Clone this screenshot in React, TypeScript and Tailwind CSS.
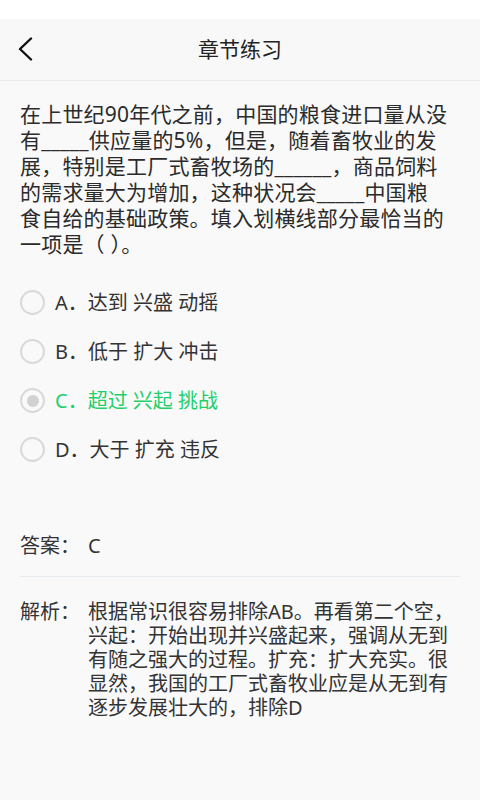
const QUESTION_LINES = [
  "在上世纪90年代之前，中国的粮食进口量从没",
  "有_____供应量的5%，但是，随着畜牧业的发",
  "展，特别是工厂式畜牧场的______，商品饲料",
  "的需求量大为增加，这种状况会_____中国粮",
  "食自给的基础政策。填入划横线部分最恰当的",
  "一项是（ ）。",
]

const OPTIONS = [
  { key: "A", text: "达到 兴盛 动摇" },
  { key: "B", text: "低于 扩大 冲击" },
  { key: "C", text: "超过 兴起 挑战" },
  { key: "D", text: "大于 扩充 违反" },
]

const ANSWER = "C"
const SELECTED = "C"

const ANALYSIS_LINES = [
  "根据常识很容易排除AB。再看第二个空，",
  "兴起：开始出现并兴盛起来，强调从无到",
  "有随之强大的过程。扩充：扩大充实。很",
  "显然，我国的工厂式畜牧业应是从无到有",
  "逐步发展壮大的，排除D",
]

function Radio({ checked }: { checked: boolean }) {
  return (
    <span className="flex h-[25px] w-[25px] shrink-0 items-center justify-center rounded-full border-2 border-[#d9d9d9]">
      {checked && <span className="h-[12px] w-[12px] rounded-full bg-[#d2d2d2]" />}
    </span>
  )
}

export default function App() {
  return (
    <div
      className="min-h-[800px] w-full bg-[#f9f9f9] text-[#333]"
      style={{ fontFamily: '"Noto Sans", "Noto Sans CJK SC", sans-serif' }}
    >
      {/* status bar */}
      <div className="h-[19px] bg-white" />

      {/* header */}
      <header className="relative flex h-[62px] items-center justify-center border-b border-[#ebebeb] bg-[#f8f8f8]">
        <button className="absolute left-[14px] top-[14px] flex h-[32px] w-[24px] items-center justify-center">
          <svg width="16" height="24" viewBox="0 0 16 24" fill="none">
            <path d="M13 1.5L2 12l11 10.5" stroke="#111" strokeWidth="2.4" strokeLinecap="round" strokeLinejoin="round" />
          </svg>
        </button>
        <h1 className="text-[21px] leading-none text-[#222]">章节练习</h1>
      </header>

      <main className="px-5">
        {/* question */}
        <p className="pt-5 text-[21px] leading-[26px] tracking-[0.2px] text-[#2b2b2b]">
          {QUESTION_LINES.map((line, i) => (
            <span key={i} className="block whitespace-nowrap">
              {line}
            </span>
          ))}
        </p>

        {/* options */}
        <ul className="mt-[21px]">
          {OPTIONS.map((opt) => {
            const checked = opt.key === SELECTED
            return (
              <li key={opt.key} className="flex h-[49px] items-center gap-[10px]">
                <Radio checked={checked} />
                <span className={`text-[20px] leading-none ${checked ? "text-[#1fcf6b]" : "text-[#333]"}`}>
                  {opt.key}．{opt.text}
                </span>
              </li>
            )
          })}
        </ul>

        {/* answer */}
        <div className="mt-[59px] flex text-[20px] leading-[25px] text-[#333]">
          <span className="w-[68px] shrink-0">答案：</span>
          <span>{ANSWER}</span>
        </div>

        <div className="mt-[18px] h-px bg-[#e6ebf0]" />

        {/* analysis */}
        <div className="mt-[23px] flex text-[20px] leading-[24px] text-[#333]">
          <span className="w-[68px] shrink-0">解析：</span>
          <p>
            {ANALYSIS_LINES.map((line, i) => (
              <span key={i} className="block whitespace-nowrap">
                {line}
              </span>
            ))}
          </p>
        </div>
      </main>
    </div>
  )
}
